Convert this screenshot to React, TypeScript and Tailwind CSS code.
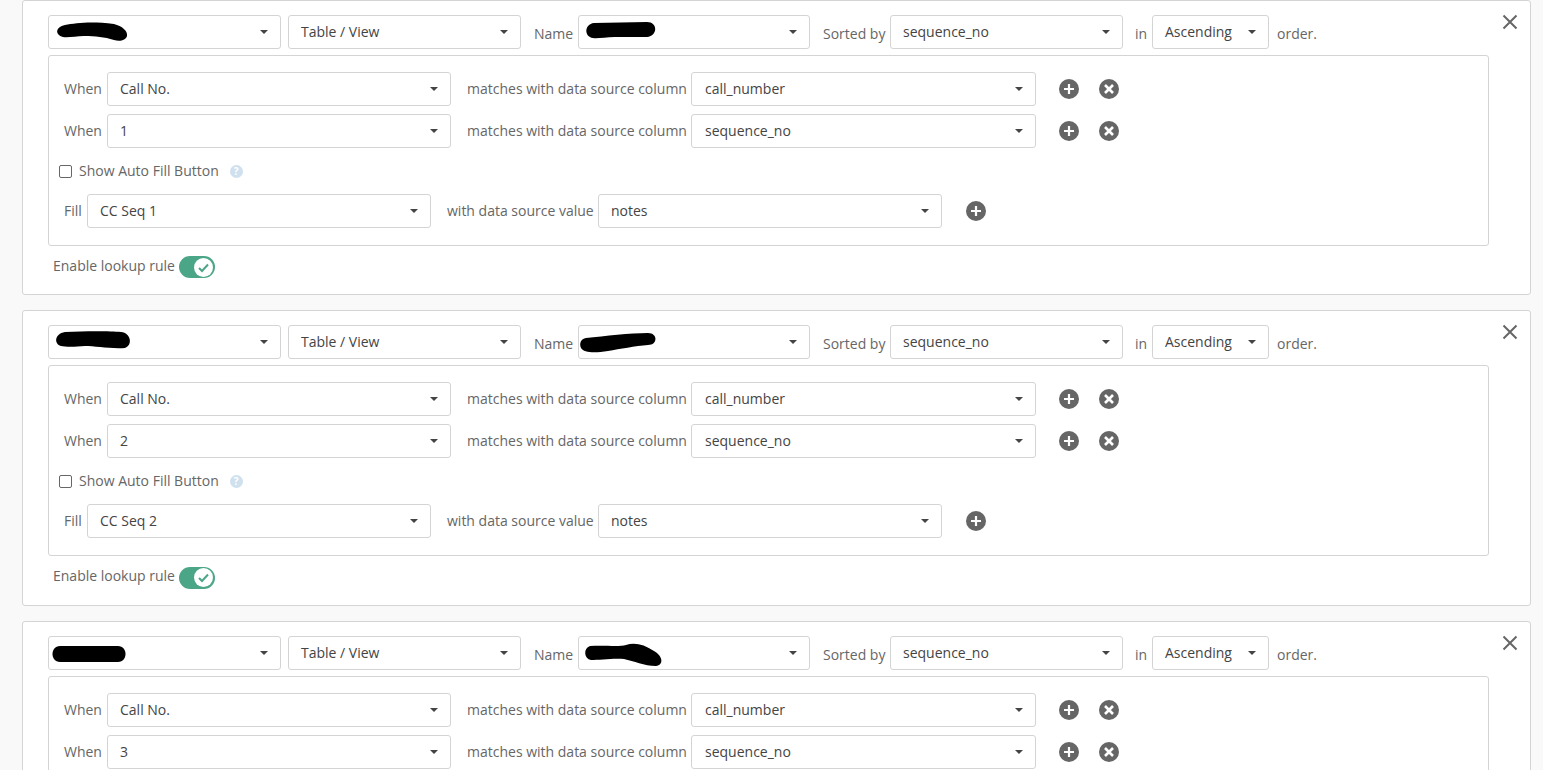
import React from 'react';

// hand-drawn redaction marks over the hidden names, one pair per card
const BLOTS = [
  {
    first: 'absolute left-[7px] top-[6px] w-[71px] h-[19px]',
    firstBox: '0 0 71 19',
    firstPath: 'M9 3C20 1 35 -1 58 2C66 4 72 9 71 14C70 18 64 20 58 18C48 15 40 14 28 14C20 14 12 16 7 15C-1 13 -1 5 9 3Z',
    name: 'absolute left-[6px] top-[6px] w-[71px] h-[17px]',
    nameBox: '0 0 71 17',
    namePath: 'M9 1L62 0C73 0 73 14 62 15L30 15C20 15 12 17 8 16C-1 15 -1 2 9 1Z',
  },
  {
    first: 'absolute left-[6px] top-[5px] w-[76px] h-[18px]',
    firstBox: '0 0 76 18',
    firstPath: 'M10 1C30 0 55 0 66 1C76 2 78 14 70 17C55 18 40 15 30 15C20 16 10 16 6 15C-1 13 -1 3 10 1Z',
    name: 'absolute left-[1px] top-[7px] w-[76px] h-[19px]',
    nameBox: '0 0 76 19',
    namePath: 'M6 5C25 3 50 0 68 0C78 0 78 12 68 12C55 13 40 16 28 18C15 20 4 20 1 15C-1 10 1 6 6 5Z',
  },
  {
    first: 'absolute left-[3px] top-[9px] w-[74px] h-[16px]',
    firstBox: '0 0 74 16',
    firstPath: 'M8 0L66 0C76 0 76 16 66 16L8 16C-2 16 -2 0 8 0Z',
    name: 'absolute left-[5px] top-[6px] w-[79px] h-[23px]',
    nameBox: '0 0 79 23',
    namePath: 'M6 3C20 2 35 4 42 2C50 -1 60 1 70 8C79 13 80 22 72 23C60 23 50 18 40 16C30 15 15 17 7 17C0 16 -1 5 6 3Z',
  },
];

const Select: React.FC<{
  value?: string;
  className: string;
  wide?: boolean;
  children?: React.ReactNode;
}> = ({ value, className, wide, children }) => (
  <div
    className={`relative h-[34px] shrink-0 flex items-center justify-between pr-[12px] bg-white border border-[#d4d4d4] rounded-[3px] text-[#444] ${
      wide ? 'pl-[13px]' : 'pl-[12px]'
    } ${className}`}
  >
    <span className="pb-[2px]">{value}</span>
    <span className="w-0 h-0 border-x-4 border-t-4 border-x-transparent border-t-[#444]" />
    {children}
  </div>
);

const Blot: React.FC<{ className: string; box: string; d: string }> = ({ className, box, d }) => (
  <svg className={className} viewBox={box} overflow="visible">
    <path d={d} fill="#000" />
  </svg>
);

const PlusIcon = () => (
  <svg width="20" height="20" viewBox="0 0 20 20" className="shrink-0 block">
    <circle cx="10" cy="10" r="10" fill="#666" />
    <path d="M10 5v10M5 10h10" stroke="#fff" strokeWidth="2.2" />
  </svg>
);

const RemoveIcon = () => (
  <svg width="20" height="20" viewBox="0 0 20 20" className="shrink-0 block">
    <circle cx="10" cy="10" r="10" fill="#666" />
    <path d="M6 6l8 8M14 6l-8 8" stroke="#fff" strokeWidth="2.6" />
  </svg>
);

const WhenRow: React.FC<{ value: string; column: string }> = ({ value, column }) => (
  <div className="flex items-center h-[34px]">
    <span className="w-[43px] ml-[15px] pb-[2px] shrink-0">When</span>
    <Select value={value} className="w-[344px]" />
    <span className="ml-[16px] pb-[2px] w-[224px] shrink-0">matches with data source column</span>
    <Select value={column} className="w-[345px]" wide />
    <span className="ml-[23px]"><PlusIcon /></span>
    <span className="ml-[20px]"><RemoveIcon /></span>
  </div>
);

const LookupCard: React.FC<{ seq: number; className: string }> = ({ seq, className }) => {
  const blot = BLOTS[seq - 1];
  return (
    <div className={`relative shrink-0 border border-[#d4d4d4] rounded-[3px] bg-white pl-[25px] pt-[14px] ${className}`}>
      <svg
        className="absolute right-[12px] top-[13px]"
        width="16"
        height="16"
        viewBox="0 0 16 16"
      >
        <path d="M1.5 1.5l13 13M14.5 1.5l-13 13" stroke="#666" strokeWidth="2" />
      </svg>

      <div className="flex items-center h-[34px]">
        <Select className="w-[233px]">
          <Blot className={blot.first} box={blot.firstBox} d={blot.firstPath} />
        </Select>
        <Select value="Table / View" className="w-[233px] ml-[7px]" />
        <span className="ml-[13px] w-[44px] mt-[3px] shrink-0">Name</span>
        <Select className="w-[232px]">
          <Blot className={blot.name} box={blot.nameBox} d={blot.namePath} />
        </Select>
        <span className="ml-[13px] w-[67px] mt-[3px] shrink-0">Sorted by</span>
        <Select value="sequence_no" className="w-[233px]" />
        <span className="ml-[12px] w-[17px] mt-[3px] shrink-0">in</span>
        <Select value="Ascending" className="w-[117px]" />
        <span className="ml-[8px] mt-[3px]">order.</span>
      </div>

      <div className="mt-[6px] w-[1441px] h-[191px] border border-[#d4d4d4] rounded-[3px] pt-[16px]">
        <div className="flex flex-col gap-[8px]">
          <WhenRow value="Call No." column="call_number" />
          <WhenRow value={String(seq)} column="sequence_no" />
        </div>
        <div className="flex items-center h-[46px] pl-[10px]">
          <span className="w-[13px] h-[13px] border border-[#666] rounded-[2px] bg-white shrink-0" />
          <span className="ml-[7px] pb-[2px]">Show Auto Fill Button</span>
          <span className="ml-[11px] w-[13px] h-[13px] rounded-full bg-[#cfe0ee] text-white text-[10px] leading-[13px] font-bold text-center">
            ?
          </span>
        </div>
        <div className="flex items-center h-[34px]">
          <span className="ml-[15px] pb-[2px] w-[23px] shrink-0">Fill</span>
          <Select value={`CC Seq ${seq}`} className="w-[344px]" />
          <span className="ml-[16px] pb-[2px] w-[151px] shrink-0">with data source value</span>
          <Select value="notes" className="w-[344px]" />
          <span className="ml-[24px]"><PlusIcon /></span>
        </div>
      </div>

      <div className="mt-[10px] ml-[5px] flex items-center h-[22px]">
        <span className="w-[126px] pb-[4px] shrink-0">Enable lookup rule</span>
        <span className="flex items-center justify-end w-[36px] h-[22px] mt-[0.4px] rounded-full bg-[#4ba688] pr-[2px]">
          <svg width="19" height="19" viewBox="0 0 19 19">
            <circle cx="9.5" cy="9.5" r="9.5" fill="#fff" />
            <path d="M5 10l3 3 6-6.5" fill="none" stroke="#4ba688" strokeWidth="2" />
          </svg>
        </span>
      </div>
    </div>
  );
};

export default function App() {
  return (
    <div className="h-screen overflow-hidden bg-[#f9f9f9] font-['Open_Sans',sans-serif] text-[14px] text-[#666]">
      <div className="ml-[22px] w-[1509px] flex flex-col gap-[15px]">
        <LookupCard seq={1} className="h-[295.4px]" />
        <LookupCard seq={2} className="h-[295.8px]" />
        <LookupCard seq={3} className="h-[295.4px]" />
      </div>
    </div>
  );
}
